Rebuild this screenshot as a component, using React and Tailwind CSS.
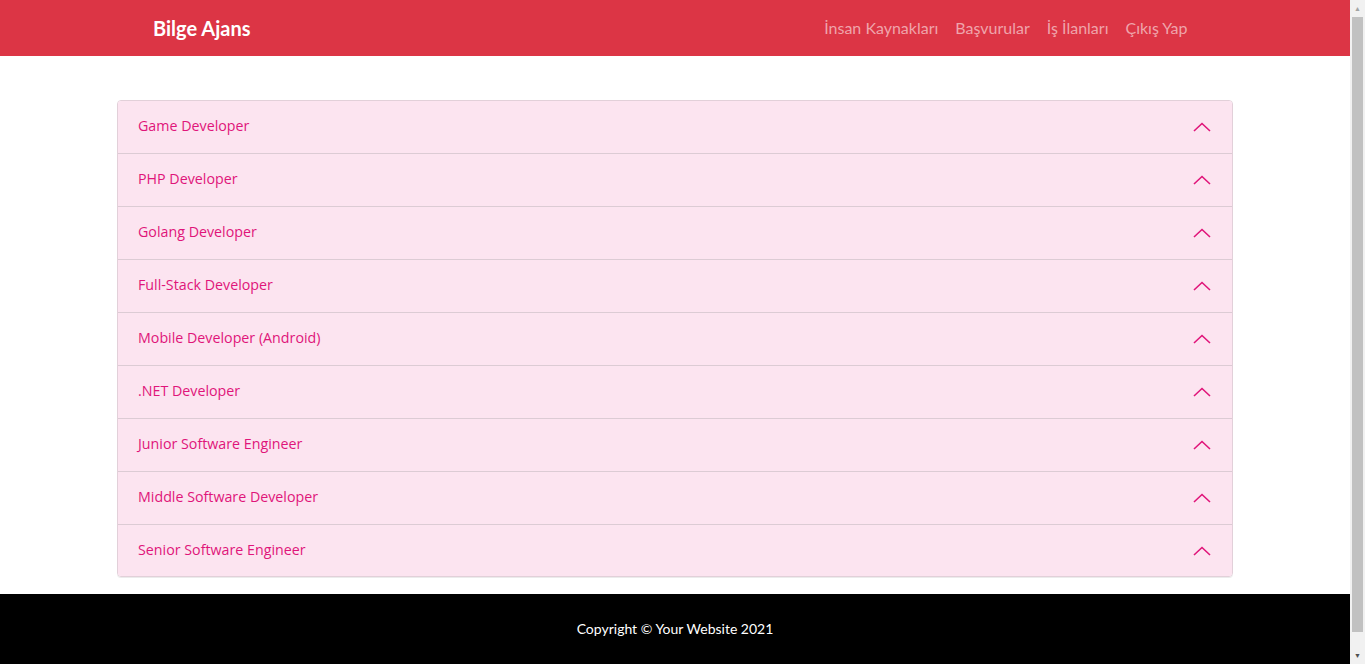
const jobs = [
  "Game Developer",
  "PHP Developer",
  "Golang Developer",
  "Full-Stack Developer",
  "Mobile Developer (Android)",
  ".NET Developer",
  "Junior Software Engineer",
  "Middle Software Developer",
  "Senior Software Engineer",
];

const navLinks = ["İnsan Kaynakları", "Başvurular", "İş İlanları", "Çıkış Yap"];

function ChevronUp() {
  return (
    <svg width="18" height="10" viewBox="0 0 18 10" fill="none" stroke="#e0157a" strokeWidth="1.6">
      <path d="M1 9 L9 1.5 L17 9" />
    </svg>
  );
}

// fake browser scrollbar, the reference was shot with one
function Scrollbar() {
  return (
    <div className="w-[15px] h-screen sticky top-0 bg-[#f1f1f1] flex flex-col items-center shrink-0">
      <div className="h-[17px] flex items-center justify-center text-[7px] text-[#a3a3a3]">▲</div>
      <div className="w-[11px] h-[615px] bg-[#c1c1c1]" />
      <div className="flex-1" />
      <div className="h-[17px] flex items-center justify-center text-[7px] text-[#505050]">▼</div>
    </div>
  );
}

export default function App() {
  return (
    <div className="flex items-start bg-white font-['Lato',sans-serif]">
      <div className="w-[1350px] shrink-0">
        <nav className="bg-[#dc3545] h-14">
          <div className="w-[1140px] mx-auto h-full flex items-center justify-between pl-12 pr-[49px]">
            <span className="text-white text-[20px] font-bold">Bilge Ajans</span>
            <div className="flex items-center">
              {navLinks.map((l) => (
                <a key={l} href="#" className="px-[8.5px] text-[16px] text-[#efa4ab]">
                  {l}
                </a>
              ))}
            </div>
          </div>
        </nav>

        <main className="w-[1140px] mx-auto px-3 pt-11 pb-[17px]">
          <div className="border border-[#e2d0d9] rounded-[4px] overflow-hidden shadow-[0_1px_0_rgba(0,0,0,0.08)] font-['Open_Sans',sans-serif]">
            {jobs.map((j, i) => (
              <button
                key={j}
                className={`w-full flex items-center justify-between pl-5 pr-[21px] bg-[#fce4f0] text-[#e0157a] text-[14.25px] text-left ${
                  i < jobs.length - 1 ? "h-[53px] border-b border-[#dccbd4]" : "h-[51px]"
                }`}
              >
                <span className="-mt-[2px]">{j}</span>
                <ChevronUp />
              </button>
            ))}
          </div>
        </main>

        <footer className="bg-black h-[86px] flex items-start justify-center pt-6">
          <p className="text-white text-[14px]">Copyright © Your Website 2021</p>
        </footer>
      </div>
      <Scrollbar />
    </div>
  );
}
